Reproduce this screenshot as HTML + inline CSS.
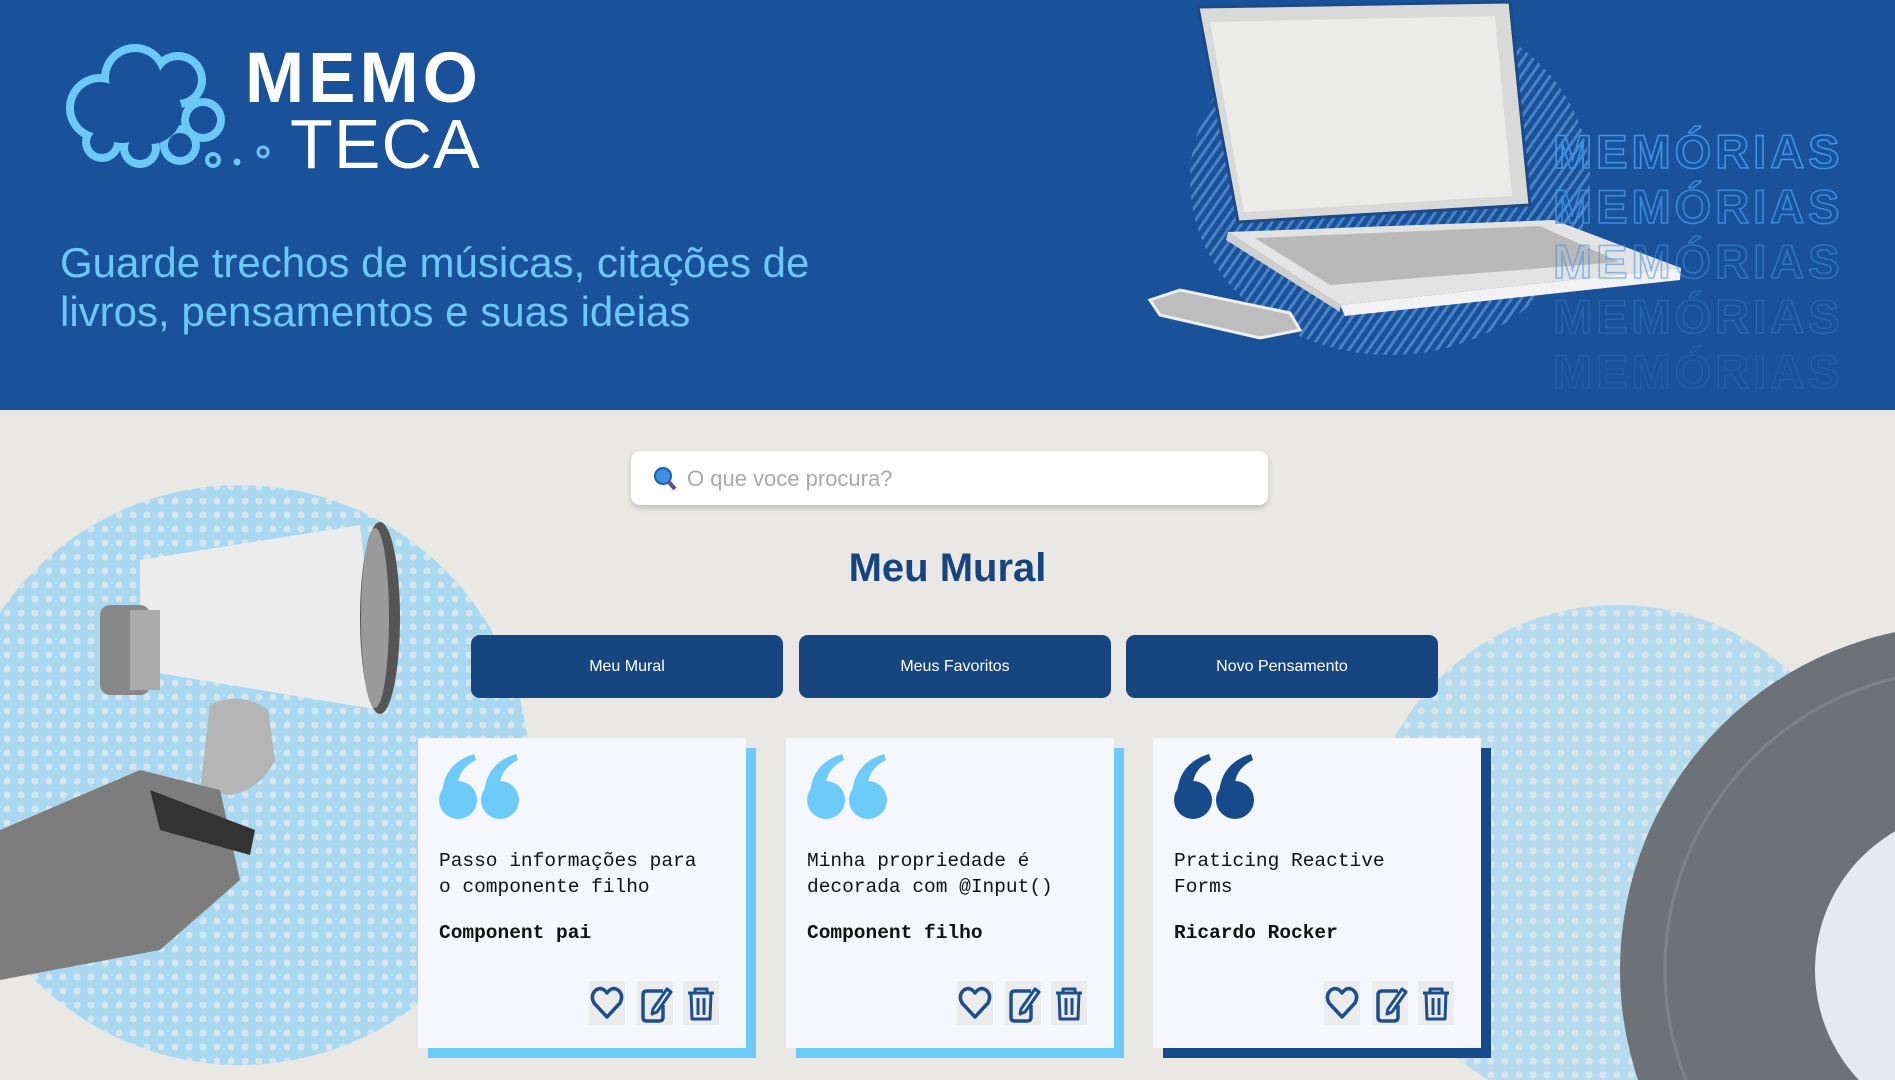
<!DOCTYPE html>
<html><head><meta charset="utf-8"><style>
*{margin:0;padding:0;box-sizing:border-box}
html,body{width:1895px;height:1080px;overflow:hidden}
body{position:relative;background:#e9e8e5;font-family:"Liberation Sans",sans-serif}
.hdr{position:absolute;left:0;top:0;width:1895px;height:410px;background:#1a519b;overflow:hidden}
.abs{position:absolute}
.tag{left:60px;top:238px;color:#6cc8f6;font-size:42px;line-height:49px}
.memo{left:245px;top:38px;color:#fff;font-size:71px;font-weight:bold;letter-spacing:4px}
.teca{left:290px;top:104px;color:#fff;font-size:70px;letter-spacing:1px;font-weight:normal}
.mem{left:1553px;color:transparent;-webkit-text-stroke:1.6px #3f93e6;font-size:47px;font-weight:bold;letter-spacing:4px;line-height:55px}
.search{left:631px;top:451px;width:637px;height:54px;background:#fff;border-radius:9px;box-shadow:0 3px 6px rgba(0,0,0,.18)}
.search span{position:absolute;left:56px;top:15px;font-size:22px;color:#aaa}
h1{position:absolute;left:0;width:1895px;top:546px;text-align:center;font-size:40px;color:#17437f;font-weight:bold}
.btn{position:absolute;top:635px;width:312px;height:63px;background:#174580;border-radius:9px;color:#fff;font-size:16px;text-align:center;line-height:63px}
.card{position:absolute;top:738px;width:328px;height:310px;background:#f5f7fc}
.sh{position:absolute;top:748px;width:328px;height:310px}
.q{position:absolute;left:20px;top:14px}
.txt{position:absolute;left:21px;top:110px;font-family:"Liberation Mono",monospace;font-size:19.5px;line-height:26px;color:#111}
.au{position:absolute;left:21px;top:184px;font-family:"Liberation Mono",monospace;font-size:19.5px;font-weight:bold;color:#111}
.ic{position:absolute;top:243px;width:36px;height:44px;background:#ececec}
</style></head><body>
<div class="hdr">
<svg class="abs" style="left:0;top:0" width="1895" height="410">
<defs><pattern id="st" width="8" height="8" patternUnits="userSpaceOnUse" patternTransform="rotate(35)"><rect width="3" height="8" fill="#5f97d6"/></pattern></defs>
<ellipse cx="1390" cy="180" rx="200" ry="175" fill="url(#st)" opacity=".7"/>
<g fill="#6cc8f6">
<circle cx="100" cy="108" r="34"/><circle cx="135" cy="78" r="34"/><circle cx="178" cy="80" r="28"/><circle cx="203" cy="120" r="22"/><circle cx="180" cy="145" r="20"/><circle cx="140" cy="148" r="20"/><circle cx="102" cy="142" r="20"/><circle cx="150" cy="112" r="30"/>
</g>
<g fill="#1a519b">
<circle cx="100" cy="108" r="26"/><circle cx="135" cy="78" r="26"/><circle cx="178" cy="80" r="20"/><circle cx="203" cy="120" r="14"/><circle cx="180" cy="145" r="12"/><circle cx="140" cy="148" r="12"/><circle cx="102" cy="142" r="12"/><circle cx="150" cy="112" r="32"/><circle cx="122" cy="115" r="28"/>
</g>
<circle cx="213" cy="160" r="6" fill="none" stroke="#6cc8f6" stroke-width="4"/>
<circle cx="237" cy="162" r="3.5" fill="#6cc8f6"/><circle cx="263" cy="152" r="5" fill="none" stroke="#6cc8f6" stroke-width="3"/>
<polygon points="1198,7 1510,2 1530,205 1238,222" fill="#d9d9d9" stroke="#1c4a86" stroke-width="3"/>
<polygon points="1210,22 1495,16 1512,196 1244,212" fill="#ebebea"/>
<polygon points="1228,232 1554,220 1681,268 1340,305" fill="#e3e3e3"/>
<polygon points="1255,238 1540,226 1620,262 1330,285" fill="#b9b9b9"/>
<polygon points="1228,232 1340,305 1340,312 1226,240" fill="#cfcfcf"/>
<polygon points="1340,305 1681,268 1680,280 1345,316" fill="#f2f2f2"/>
<polygon points="1150,300 1180,290 1290,313 1300,330 1260,338 1160,315" fill="#bdbdbd" stroke="#eee" stroke-width="3"/>
</svg>
<div class="abs memo">MEMO</div>
<div class="abs teca">TECA</div>
<div class="abs tag">Guarde trechos de músicas, citações de<br>livros, pensamentos e suas ideias</div>
<div class="abs mem" style="top:124px;opacity:1">MEMÓRIAS</div>
<div class="abs mem" style="top:179px;opacity:.85">MEMÓRIAS</div>
<div class="abs mem" style="top:234px;opacity:.55">MEMÓRIAS</div>
<div class="abs mem" style="top:289px;opacity:.3">MEMÓRIAS</div>
<div class="abs mem" style="top:344px;opacity:.15">MEMÓRIAS</div>
</div>
<svg class="abs" style="left:0;top:410px;display:block" width="1895" height="670">
<defs><pattern id="dt" width="14" height="14" patternUnits="userSpaceOnUse"><rect width="14" height="14" fill="#aad8f0"/><circle cx="7" cy="7" r="3.5" fill="#d6e6ee"/></pattern></defs>
<circle cx="240" cy="365" r="290" fill="url(#dt)"/>
<circle cx="1618" cy="450" r="255" fill="url(#dt)" opacity=".8"/>
<circle cx="1965" cy="560" r="345" fill="#6d7278"/>
<circle cx="1965" cy="560" r="300" fill="none" stroke="#7d8288" stroke-width="3"/>
<circle cx="1975" cy="560" r="160" fill="#e6eaee"/>
<polygon points="140,150 360,115 380,300 140,260" fill="#ececec"/>
<ellipse cx="380" cy="208" rx="20" ry="96" fill="#555" />
<ellipse cx="375" cy="208" rx="14" ry="90" fill="#9a9a9a"/>
<rect x="100" y="195" width="50" height="90" rx="10" fill="#888"/>
<rect x="130" y="200" width="30" height="80" fill="#aaa"/>
<path d="M210 295 Q240 280 268 300 L275 350 Q260 380 230 385 L200 380 Z" fill="#b5b5b5"/>
<path d="M0 420 L140 360 L220 380 L240 470 L160 540 L0 570 Z" fill="#7d7d7d"/>
<path d="M150 380 L255 420 L250 445 L160 420 Z" fill="#333"/>
</svg>
<div class="abs search"><svg class="abs" style="left:22px;top:15px" width="26" height="26"><circle cx="10" cy="10" r="8" fill="#3a8fe0" stroke="#1c5fb0" stroke-width="2"/><line x1="15" y1="15" x2="22" y2="23" stroke="#6a4a8a" stroke-width="4"/></svg><span>O que voce procura?</span></div>
<h1>Meu Mural</h1>
<div class="btn" style="left:471px">Meu Mural</div>
<div class="btn" style="left:799px">Meus Favoritos</div>
<div class="btn" style="left:1126px">Novo Pensamento</div>

<div class="sh" style="left:428px;background:#6ccbf8"></div>
<div class="sh" style="left:796px;background:#6ccbf8"></div>
<div class="sh" style="left:1163px;background:#174a8a"></div>

<div class="card" style="left:418px">
<svg class="q" width="90" height="70" viewBox="0 0 90 70"><g fill="#6ccbf8"><circle cx="20" cy="48" r="19"/><path d="M4 45 Q4 12 36 2 L38 8 Q18 18 20 38 Z"/><circle cx="62" cy="48" r="19"/><path d="M46 45 Q46 12 78 2 L80 8 Q60 18 62 38 Z"/></g></svg>
<div class="txt">Passo informações para<br>o componente filho</div>
<div class="au">Component pai</div>
<div class="ic" style="left:171px"></div><div class="ic" style="left:219px"></div><div class="ic" style="left:265px"></div>
<svg class="abs" style="left:171px;top:243px" width="140" height="44" fill="none" stroke="#1d4f8f" stroke-width="3.5" stroke-linejoin="round">
<path d="M18 36 L5 22 Q1 14 7 9 Q13 5 18 12 Q23 5 29 9 Q35 14 31 22 Z"/>
<path d="M74 10 H58 Q54 10 54 14 V36 Q54 40 58 40 H70 Q74 40 74 36 V24"/><path d="M64 28 L78 8 L82 11 L68 31 L63 33 Z" stroke-width="3"/>
<path d="M99 12 H125 M106 12 V8 H118 V12 M102 12 L103 38 H121 L122 12 M109 17 V34 M115 17 V34" stroke-width="3"/>
</svg>
</div>

<div class="card" style="left:786px">
<svg class="q" width="90" height="70" viewBox="0 0 90 70"><g fill="#6ccbf8"><circle cx="20" cy="48" r="19"/><path d="M4 45 Q4 12 36 2 L38 8 Q18 18 20 38 Z"/><circle cx="62" cy="48" r="19"/><path d="M46 45 Q46 12 78 2 L80 8 Q60 18 62 38 Z"/></g></svg>
<div class="txt">Minha propriedade é<br>decorada com @Input()</div>
<div class="au">Component filho</div>
<div class="ic" style="left:171px"></div><div class="ic" style="left:219px"></div><div class="ic" style="left:265px"></div>
<svg class="abs" style="left:171px;top:243px" width="140" height="44" fill="none" stroke="#1d4f8f" stroke-width="3.5" stroke-linejoin="round">
<path d="M18 36 L5 22 Q1 14 7 9 Q13 5 18 12 Q23 5 29 9 Q35 14 31 22 Z"/>
<path d="M74 10 H58 Q54 10 54 14 V36 Q54 40 58 40 H70 Q74 40 74 36 V24"/><path d="M64 28 L78 8 L82 11 L68 31 L63 33 Z" stroke-width="3"/>
<path d="M99 12 H125 M106 12 V8 H118 V12 M102 12 L103 38 H121 L122 12 M109 17 V34 M115 17 V34" stroke-width="3"/>
</svg>
</div>

<div class="card" style="left:1153px">
<svg class="q" width="90" height="70" viewBox="0 0 90 70"><g fill="#174a8a"><circle cx="20" cy="48" r="19"/><path d="M4 45 Q4 12 36 2 L38 8 Q18 18 20 38 Z"/><circle cx="62" cy="48" r="19"/><path d="M46 45 Q46 12 78 2 L80 8 Q60 18 62 38 Z"/></g></svg>
<div class="txt">Praticing Reactive<br>Forms</div>
<div class="au">Ricardo Rocker</div>
<div class="ic" style="left:171px"></div><div class="ic" style="left:219px"></div><div class="ic" style="left:265px"></div>
<svg class="abs" style="left:171px;top:243px" width="140" height="44" fill="none" stroke="#1d4f8f" stroke-width="3.5" stroke-linejoin="round">
<path d="M18 36 L5 22 Q1 14 7 9 Q13 5 18 12 Q23 5 29 9 Q35 14 31 22 Z"/>
<path d="M74 10 H58 Q54 10 54 14 V36 Q54 40 58 40 H70 Q74 40 74 36 V24"/><path d="M64 28 L78 8 L82 11 L68 31 L63 33 Z" stroke-width="3"/>
<path d="M99 12 H125 M106 12 V8 H118 V12 M102 12 L103 38 H121 L122 12 M109 17 V34 M115 17 V34" stroke-width="3"/>
</svg>
</div>
</body></html>
